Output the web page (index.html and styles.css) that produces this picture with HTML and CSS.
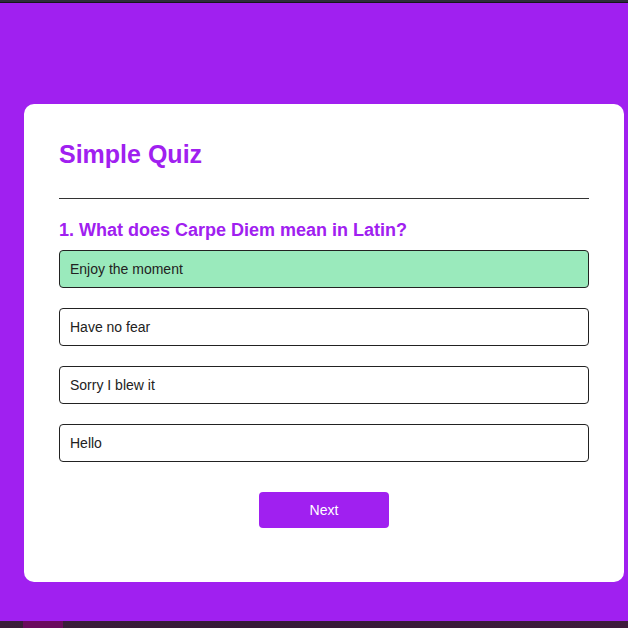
FILE: index.html
```html
<!DOCTYPE html>
<html lang="en">
<head>
<meta charset="utf-8">
<title>Simple Quiz</title>
<link rel="stylesheet" href="styles.css">
</head>
<body>
<div class="frame">
  <div class="topbar"></div>
  <main class="stage">
    <div class="app">
      <h1 class="title">Simple Quiz</h1>
      <div class="quiz">
        <h2 class="question">1. What does Carpe Diem mean in Latin?</h2>
        <div class="answers">
          <button class="btn correct">Enjoy the moment</button>
          <button class="btn">Have no fear</button>
          <button class="btn">Sorry I blew it</button>
          <button class="btn">Hello</button>
        </div>
        <button class="next">Next</button>
      </div>
    </div>
  </main>
  <div class="bottombar"><span class="tab"></span></div>
</div>
</body>
</html>
```
FILE: styles.css
```css
* { box-sizing: border-box; }
html, body { margin: 0; padding: 0; }
body {
  font-family: "Liberation Sans", Arial, sans-serif;
  background: #a020f0;
}
.frame {
  height: 628px;
  display: flex;
  flex-direction: column;
}
.topbar {
  height: 3px;
  background: #2c2d3a;
  border-bottom: 1px solid #15161c;
}
.stage {
  flex: 1;
  background: #a020f0;
  padding: 101px 4px 0 24px;
}
.app {
  width: 600px;
  height: 478px;
  background: #fff;
  border-radius: 10px;
  padding: 35px 35px 0 35px;
}
.title {
  margin: 0;
  font-size: 25px;
  line-height: 30px;
  font-weight: 700;
  color: #a020f0;
  padding-bottom: 29px;
  border-bottom: 1px solid #333;
}
.quiz { padding-top: 21px; }
.question {
  margin: 0 0 9px;
  font-size: 18px;
  font-weight: 700;
  color: #a020f0;
}
.answers {
  display: flex;
  flex-direction: column;
  gap: 20px;
}
.btn {
  display: block;
  width: 100%;
  text-align: left;
  font-family: inherit;
  font-size: 14px;
  line-height: 16px;
  color: #222;
  background: #fff;
  border: 1px solid #222;
  border-radius: 4px;
  padding: 10px;
}
.btn.correct { background: #9aeabc; }
.next {
  display: block;
  margin: 30px auto 0;
  width: 130px;
  height: 36px;
  font-family: inherit;
  font-size: 14px;
  color: #fff;
  background: #a020f0;
  border: 0;
  border-radius: 4px;
}
.bottombar {
  height: 7px;
  background: linear-gradient(90deg, #3a1d3a, #351837 40%, #3e1a3c);
  display: flex;
  padding-left: 23px;
}
.tab {
  width: 40px;
  background: #6a0a5e;
}
```
